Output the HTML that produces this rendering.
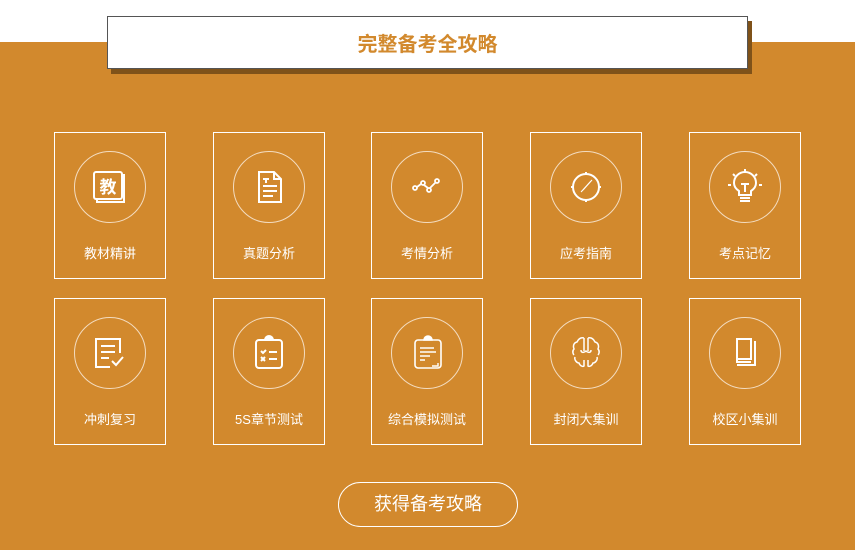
<!DOCTYPE html>
<html><head><meta charset="utf-8"><style>
*{margin:0;padding:0;box-sizing:border-box}
body{width:855px;height:550px;overflow:hidden;background:#fff;position:relative;font-family:"Liberation Sans","Noto Sans CJK SC",sans-serif}
.bg{position:absolute;left:0;top:42px;width:855px;height:508px;background:#d2892d}
.sh{position:absolute;left:111px;top:21px;width:641px;height:53px;background:#7f5219}
.tt{position:absolute;left:107px;top:16px;width:641px;height:53px;background:#fff;border:1px solid #555;color:#d2892d;font-size:20px;font-weight:bold;text-align:center;line-height:56px}
.box{position:absolute;width:112px;height:147px;border:1px solid #fff}
.c{position:absolute;left:19px;top:18px;width:72px;height:72px;border:1px solid #f3dcc0;border-radius:50%}
.c svg{position:absolute;left:13px;top:13px}
.lb{position:absolute;left:0;width:110px;top:110px;text-align:center;color:#fff;font-size:13px}
.btn{position:absolute;left:338px;top:482px;width:180px;height:45px;border:1px solid #fff;border-radius:23px;color:#fff;font-size:18px;text-align:center;line-height:43px}
</style></head><body>
<div class="bg"></div><div class="sh"></div>
<div class="tt">完整备考全攻略</div>

<div class="box" style="left:54px;top:132px"><div class="c"><svg width="44" height="44" viewBox="-2 -2 44 44" fill="none" stroke="#fff" stroke-width="2"><rect x="4" y="5" width="28" height="27" rx="2"/><path d="M7 32v3h27V8h-2"/><text x="18" y="26" font-size="17" font-weight="bold" fill="#fff" stroke="none" text-anchor="middle" font-family="Noto Sans CJK SC">教</text></svg></div><div class="lb">教材精讲</div></div>
<div class="box" style="left:213px;top:132px"><div class="c"><svg width="44" height="44" viewBox="-2 -2 44 44" fill="none" stroke="#fff" stroke-width="2"><path d="M10 5h15l7 7v23H10z"/><path d="M25 5v7h7M14 12h6M17 12v4M14 19h14M14 24h14M14 29h10"/></svg></div><div class="lb">真题分析</div></div>
<div class="box" style="left:371px;top:132px"><div class="c"><svg width="44" height="44" viewBox="-2 -2 44 44" fill="none" stroke="#fff" stroke-width="1.8"><circle cx="8" cy="21" r="2"/><circle cx="16" cy="16" r="2"/><circle cx="22" cy="23" r="2"/><circle cx="30" cy="14" r="2"/><path d="M10 20l4-3M17 18l4 3M23 21l6-6"/></svg></div><div class="lb">考情分析</div></div>
<div class="box" style="left:530px;top:132px"><div class="c"><svg width="44" height="44" viewBox="-2 -2 44 44" fill="none" stroke="#fff" stroke-width="2"><circle cx="20" cy="20" r="13"/><path d="M20 5v3M20 32v3M5 20h3M32 20h3"/><path d="M26 13l-8 9-3 3 9-10z" fill="#fff" stroke-width="1"/></svg></div><div class="lb">应考指南</div></div>
<div class="box" style="left:689px;top:132px"><div class="c"><svg width="44" height="44" viewBox="-2 -2 44 44" fill="none" stroke="#fff" stroke-width="2"><path d="M14 28v-4c-3-2-5-5-5-8a11 11 0 0 1 22 0c0 3-2 6-5 8v4z"/><path d="M15 31h10M15 34h10M16 17h8M20 17v8M20 2v3M8 7l2 2M32 7l-2 2M3 18h3M34 18h3"/></svg></div><div class="lb">考点记忆</div></div>

<div class="box" style="left:54px;top:298px"><div class="c"><svg width="44" height="44" viewBox="-2 -2 44 44" fill="none" stroke="#fff" stroke-width="2"><path d="M30 20V6H6v28h14"/><path d="M11 13h14M11 19h14M11 25h8M22 28l4 4 7-8"/></svg></div><div class="lb">冲刺复习</div></div>
<div class="box" style="left:213px;top:298px"><div class="c"><svg width="44" height="44" viewBox="-2 -2 44 44" fill="none" stroke="#fff" stroke-width="2"><rect x="7" y="7" width="26" height="28" rx="3"/><path d="M16 7a4 4 0 0 1 8 0z" fill="#fff"/><path d="M12 18l2 2 3-3M20 19h8M12 24l4 4M16 24l-4 4M20 26h8"/></svg></div><div class="lb">5S章节测试</div></div>
<div class="box" style="left:371px;top:298px"><div class="c"><svg width="44" height="44" viewBox="-2 -2 44 44" fill="none" stroke="#fff" stroke-width="1.6"><rect x="8" y="7" width="26" height="28" rx="3"/><path d="M17 7a4 4 0 0 1 8 0z" fill="#fff"/><path d="M13 15h14M13 19h16M13 23h10M13 27h5M31 30v3h-6" stroke-width="1.4"/></svg></div><div class="lb">综合模拟测试</div></div>
<div class="box" style="left:530px;top:298px"><div class="c"><svg width="44" height="44" viewBox="-2 -2 44 44" fill="none" stroke="#fff" stroke-width="1.5"><path d="M18 5c-4-1-6 2-7 4-4 1-4 5-3 7-2 2-1 5 0 6M18 5v13M22 5c4-1 6 2 7 4 4 1 4 5 3 7 2 2 1 5 0 6M22 5v13M9 24c-1 3 2 6 4 6 1 3 4 4 5 3v-6M31 24c1 3-2 6-4 6-1 3-4 4-5 3v-6M15 17c0 3 3 3 5 1 2 2 5 2 5-1"/></svg></div><div class="lb">封闭大集训</div></div>
<div class="box" style="left:689px;top:298px"><div class="c"><svg width="44" height="44" viewBox="-2 -2 44 44" fill="none" stroke="#fff" stroke-width="2"><path d="M12 6h14v20H12zM12 26v3h14M30 8v24H12"/></svg></div><div class="lb">校区小集训</div></div>

<div class="btn">获得备考攻略</div>
</body></html>
